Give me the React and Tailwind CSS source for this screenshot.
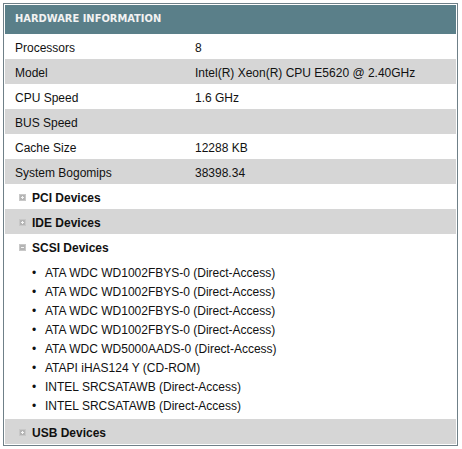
import React from 'react';

const info = [
  ['Processors', '8'],
  ['Model', 'Intel(R) Xeon(R) CPU E5620 @ 2.40GHz'],
  ['CPU Speed', '1.6 GHz'],
  ['BUS Speed', ''],
  ['Cache Size', '12288 KB'],
  ['System Bogomips', '38398.34'],
];

const scsi = [
  'ATA WDC WD1002FBYS-0 (Direct-Access)',
  'ATA WDC WD1002FBYS-0 (Direct-Access)',
  'ATA WDC WD1002FBYS-0 (Direct-Access)',
  'ATA WDC WD1002FBYS-0 (Direct-Access)',
  'ATA WDC WD5000AADS-0 (Direct-Access)',
  'ATAPI iHAS124 Y (CD-ROM)',
  'INTEL SRCSATAWB (Direct-Access)',
  'INTEL SRCSATAWB (Direct-Access)',
];

const Toggle = ({ open }) => (
  <svg width="7" height="7" viewBox="0 0 7 7" className="shrink-0">
    <rect x="0" y="0" width="7" height="7" fill="#b4b4b4" />
    <rect x="0.5" y="0.5" width="6" height="6" fill="none" stroke="#c8c8c8" strokeWidth="1" />
    <rect x="2" y="3" width="3" height="1" fill="#f4f4f4" />
    {!open && <rect x="3" y="2" width="1" height="3" fill="#f4f4f4" />}
  </svg>
);

const Section = ({ title, open, gray }) => (
  <div className={`h-[25px] flex items-center gap-[6px] pl-[14px] pt-[2px] ${gray ? 'bg-[#d6d6d6]' : 'bg-white'}`}>
    <Toggle open={open} />
    <span className="font-bold text-[12px] text-[#111]">{title}</span>
  </div>
);

export default function App() {
  return (
    <div className="bg-white w-[462px] h-[449px] pt-[3px] pl-[3px]" style={{ fontFamily: '"Liberation Sans", Arial, sans-serif' }}>
      <div className="w-[455px] border border-[#6f8088] p-px bg-white">
        <div className="h-[29px] bg-[#5a7f89] flex items-center pl-[10px]">
          <span className="text-[11px] font-bold text-[#f2f2f2]" style={{ fontFamily: '"DejaVu Sans Condensed", "DejaVu Sans", sans-serif' }}>
            HARDWARE INFORMATION
          </span>
        </div>
        {info.map(([label, value], i) => (
          <div key={label} className={`h-[25px] flex items-center pt-[2px] text-[12px] text-[#111] ${i % 2 ? 'bg-[#d6d6d6]' : 'bg-white'}`}>
            <span className="w-[190px] pl-[10px] shrink-0">{label}</span>
            <span>{value}</span>
          </div>
        ))}
        <Section title="PCI Devices" />
        <Section title="IDE Devices" gray />
        <div className="bg-white">
          <Section title="SCSI Devices" open />
          <ul className="pt-[3px] pb-[5px]">
            {scsi.map((d, i) => (
              <li key={i} className="h-[19px] flex items-center pt-[2px] text-[12px] text-[#111]">
                <span className="w-[40px] pl-[27px] shrink-0">•</span>
                <span>{d}</span>
              </li>
            ))}
          </ul>
        </div>
        <Section title="USB Devices" gray />
      </div>
    </div>
  );
}
